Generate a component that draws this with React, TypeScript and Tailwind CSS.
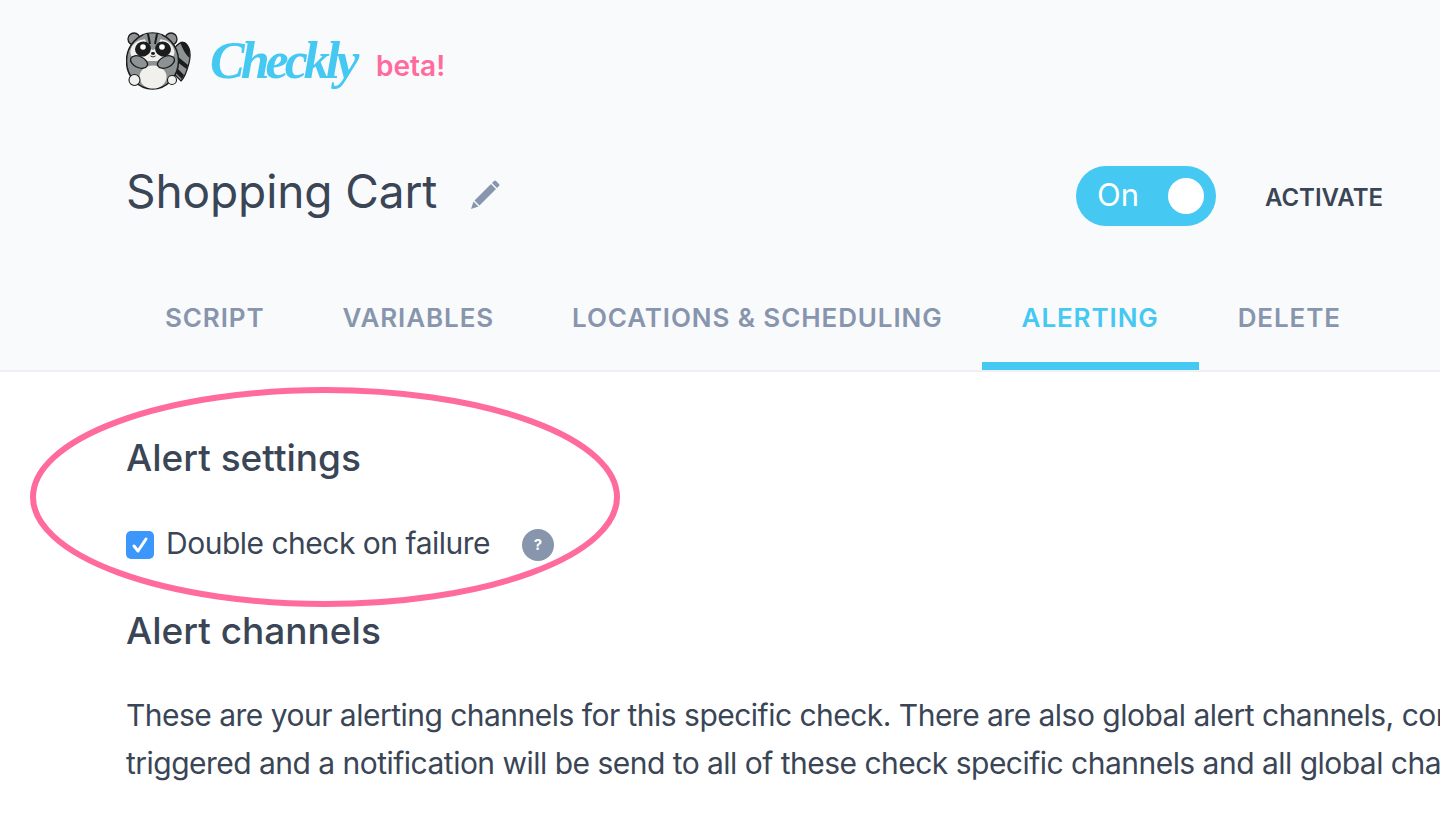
import React from "react";

function Raccoon() {
  const grey = "#8d9294";
  const ink = "#1b1c1c";
  const cream = "#f0f0ec";
  return (
    <svg width="66" height="60" viewBox="6 6 66 60" className="shrink-0">
      <path d="M54 24 C57 19 62 16 65 18 C70 22 71 30 69 38 C67 46 65 52 61 56 L55 50Z" fill={grey} stroke={ink} strokeWidth="1.2" />
      <path d="M60 17 C64 16 67 18 68 21 C70 26 70 31 69.5 33 C66 30 63 25 60 17Z" fill={ink} />
      <path d="M57 31 L68 40 L66.5 44 L56 36Z M56 42 L64 50 L62 54 L55 47Z" fill={ink} />
      <circle cx="14" cy="14" r="6" fill={grey} stroke={ink} strokeWidth="1.3" />
      <circle cx="51" cy="14" r="6" fill={grey} stroke={ink} strokeWidth="1.3" />
      <ellipse cx="32.5" cy="36" rx="26" ry="28" fill={grey} stroke={ink} strokeWidth="1.5" />
      <path d="M15 18 C21 12 44 12 50 18 C55 23 56 29 52 33 C47 37 42 36 33 36 C24 36 17 37 12 32 C9 28 10 22 15 18Z" fill={cream} />
      <path d="M23 10 C28 8 37 8 42 10 L37 23 L33 25 L29 23Z" fill={grey} />
      <path d="M28 9 L30 19 M37 9 L35 19" stroke={ink} strokeWidth="2" />
      <ellipse cx="23" cy="24" rx="8" ry="7.5" fill={ink} transform="rotate(-20 23 24)" />
      <ellipse cx="43" cy="24" rx="8" ry="7.5" fill={ink} transform="rotate(20 43 24)" />
      <circle cx="23" cy="22" r="2.8" fill="#fff" />
      <circle cx="42" cy="22" r="2.8" fill="#fff" />
      <ellipse cx="33" cy="28.5" rx="2" ry="1.4" fill={ink} />
      <path d="M30.5 31 Q33 33 35.5 31" stroke={ink} strokeWidth="0.9" fill="none" />
      <ellipse cx="33" cy="52" rx="13.5" ry="11.5" fill={cream} />
      <ellipse cx="19" cy="37" rx="9" ry="5.5" fill={grey} stroke={ink} strokeWidth="1.3" transform="rotate(25 19 37)" />
      <ellipse cx="46" cy="37" rx="9" ry="5.5" fill={grey} stroke={ink} strokeWidth="1.3" transform="rotate(-25 46 37)" />
      <circle cx="14.5" cy="55" r="5.5" fill={cream} stroke={ink} strokeWidth="1.1" />
      <circle cx="52" cy="55" r="4.5" fill={cream} stroke={ink} strokeWidth="1.1" />
    </svg>
  );
}

const tabs = ["SCRIPT", "VARIABLES", "LOCATIONS & SCHEDULING", "ALERTING", "DELETE"];

export default function App() {
  return (
    <div className="relative h-[818px] w-[1440px] overflow-hidden bg-white font-['Inter',sans-serif] text-[#3a4556]">
      <header className="h-[372px] border-b-2 border-[#eef0f4] bg-[#f9fafc]">
        <div className="flex h-[122px] items-center pl-[126px]">
          <Raccoon />
          <span className="ml-[18px] w-[150px] font-['Liberation_Serif',serif] text-[52px] leading-none font-bold tracking-[-4px] whitespace-nowrap text-[#45c8f1] italic">
            Checkly
          </span>
          <span className="mt-[10px] ml-[16px] text-[28px] font-semibold text-[#ff6b9d]">beta!</span>
        </div>
        <div className="mt-[12px] flex h-[116px] items-center justify-between pr-[57px] pl-[126px]">
          <div className="mb-[2px] flex items-center">
            <h1 className="text-[46px] leading-none font-normal tracking-[-0.1px]">Shopping Cart</h1>
            <svg width="30" height="30" viewBox="5 5 30 30" className="mt-[8px] ml-[33px]">
              <path d="M6 34 L8.5 26.5 L13.5 31.5Z M9.5 25.5 L26 9 L31 14 L14.5 30.5Z M27 8 L29 6 Q30 5 31 6 L34 9 Q35 10 34 11 L32 13Z" fill="#8795ad" />
            </svg>
          </div>
          <div className="mt-[8px] flex items-center gap-[49px]">
            <div className="flex h-[60px] w-[140px] items-center justify-between rounded-full bg-[#45c8f1] pr-[12px] pl-[21px]">
              <span className="mb-[2px] text-[31px] text-white">On</span>
              <span className="h-9 w-9 rounded-full bg-white" />
            </div>
            <span className="pt-[4px] text-[24px] font-semibold">ACTIVATE</span>
          </div>
        </div>
        <nav className="flex pl-[126px]">
          {tabs.map((t) => (
            <div
              key={t}
              className={
                t === "ALERTING"
                  ? "flex h-[120px] items-center border-b-[8px] border-[#45c8f1] px-[40px] pt-[22px] text-[26px] font-semibold tracking-[0.9px] text-[#45c8f1]"
                  : "flex h-[120px] items-center border-b-[8px] border-transparent px-[39px] pt-[22px] text-[26px] font-semibold tracking-[0.9px] text-[#8795ad]"
              }
            >
              {t}
            </div>
          ))}
        </nav>
      </header>
      <main className="pl-[126px]">
        <h2 className="mt-[62px] text-[37px] leading-[48px] font-medium">Alert settings</h2>
        <div className="mt-[41px] flex h-[40px] items-center">
          <span className="mt-[4px] flex h-[28px] w-[28px] items-center justify-center rounded-[5px] bg-[#3b97fb]">
            <svg width="20" height="20" viewBox="0 0 20 20" fill="none" stroke="#fff" strokeWidth="3" strokeLinecap="round" strokeLinejoin="round">
              <path d="M4 11 L8 16 L16 4" />
            </svg>
          </span>
          <span className="ml-[12px] text-[30px] tracking-[-0.5px]">Double check on failure</span>
          <span className="mt-[4px] ml-[32px] flex h-8 w-8 items-center justify-center rounded-full bg-[#8795ad] text-[15px] font-bold text-white">?</span>
        </div>
        <h2 className="mt-[44px] text-[37px] leading-[48px] font-medium">Alert channels</h2>
        <p className="mt-[36px] text-[30px] leading-[48px] tracking-[-0.52px] whitespace-nowrap">
          These are your alerting channels for this specific check. There are also global alert channels, con
          <br />
          triggered and a notification will be send to all of these check specific channels and all global cha
        </p>
      </main>
      <svg width="1440" height="818" className="pointer-events-none absolute top-0 left-0" fill="none">
        <ellipse cx="325" cy="497" rx="292" ry="107" stroke="#ff6b9d" strokeWidth="6" />
      </svg>
    </div>
  );
}
